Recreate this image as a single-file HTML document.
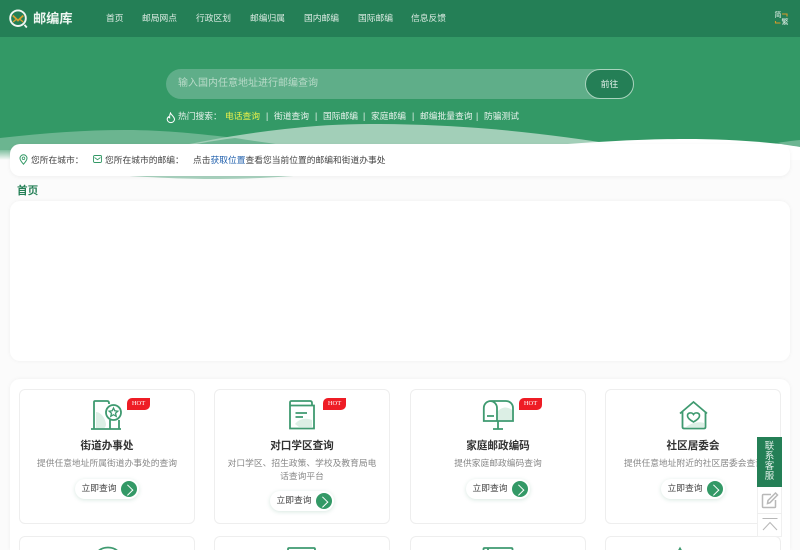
<!DOCTYPE html>
<html lang="zh"><head><meta charset="utf-8"><title>邮编库</title>
<style>
*{box-sizing:border-box;margin:0;padding:0}
html,body{width:800px;height:550px;overflow:hidden;background:#fbfbfb;font-family:"Liberation Sans","Noto Sans CJK SC",sans-serif}
#wrap{position:relative;width:800px;height:550px;overflow:hidden;background:#fbfbfb;filter:blur(.3px)}
.a{position:absolute;white-space:nowrap}
#nav{left:0;top:0;width:800px;height:37px;background:#247f56}
.n{top:12px;font-size:8.75px;line-height:13px;color:#dcebe3}
#hero{left:0;top:37px;width:800px;height:113px;background:#339966}
#search{left:166px;top:69px;width:440px;height:30px;border-radius:15px 0 0 15px;background:#5fae89;color:#b9dbc9;font-size:10px;line-height:30px;padding-left:12px}
#go{left:585px;top:69px;width:49px;height:30px;border-radius:15px;background:#247f56;border:1px solid #a9d3bd;color:#e6f2ec;font-size:8.75px;line-height:28px;text-align:center}
.h{top:110px;font-size:8.75px;line-height:13px;color:#e8f3ed}
#bar{left:10px;top:144px;width:780px;height:32px;background:#fff;border-radius:10px;box-shadow:0 1px 4px rgba(0,0,0,.05)}
.b{top:154px;font-size:8.75px;line-height:12px;color:#444}
#panel1{left:10px;top:201px;width:780px;height:160px;background:#fff;border-radius:10px;box-shadow:0 0 4px rgba(0,0,0,.05)}
#panel2{left:10px;top:379px;width:780px;height:171px;background:#fff;border-radius:10px 10px 0 0;box-shadow:0 0 4px rgba(0,0,0,.05)}
.c{top:389px;width:176px;height:135px;background:#fff;border:1px solid #eee;border-radius:6px}
.r{top:536px;width:176px;height:14px;background:#fff;border:1px solid #eee;border-bottom:0;border-radius:6px 6px 0 0}
.t{top:439px;text-align:center;font-size:10.6px;font-weight:bold;color:#333;line-height:15px}
.d{text-align:center;font-size:8.75px;line-height:12.5px;color:#888;white-space:normal}
.btn{height:20px;width:64px;border-radius:10px;background:#fff;box-shadow:0 1px 4px rgba(40,130,90,.18);font-size:8.75px;line-height:19px;color:#444;padding-left:6.5px}
.btn i{position:absolute;right:2px;top:2px;width:16px;height:16px;border-radius:50%;background:#339966}
.btn i:after{content:"";position:absolute;left:3px;top:4.5px;width:6.5px;height:6.5px;border-top:1px solid #fff;border-right:1px solid #fff;transform:rotate(45deg)}
.hot{width:23px;height:12px;background:#ee1c25;border-radius:5px 0 5px 0;color:#fff;font:6.5px/12px "Liberation Serif",serif;text-align:center}
svg{position:absolute;overflow:hidden}
</style></head><body><div id="wrap">
<div class="a" id="hero"></div>
<svg class="a" style="left:0;top:110px" width="800" height="55" viewBox="0 110 800 55">
<defs><linearGradient id="fade" x1="0" y1="0" x2="0" y2="1"><stop offset="0" stop-color="#7fbf9f"/><stop offset="1" stop-color="#fbfbfb"/></linearGradient></defs>
<path d="M0 150H12V160H0Z" fill="url(#fade)"/>
<path d="M0 138C45 133 85 130 125 130C165 130 200 134 235 138C210 141 190 145 170 150H0Z" fill="#fff" fill-opacity=".28"/>
<path d="M160 150C230 135 300 124 370 124C460 124 540 132 625 146V150Z" fill="#a2cfb8"/>
<path d="M170 150C190 145 210 141 235 138C260 142 290 146 320 150Z" fill="#6db592"/>
<path d="M760 146C775 143 790 141 800 140V150H760Z" fill="#6db592"/>
<path d="M545 146C600 141 650 139 685 139C730 139 770 142 800 147V160H545Z" fill="#fff"/>
</svg>
<div class="a" id="nav"></div>
<svg class="a" style="left:9px;top:9px" width="20" height="20" viewBox="0 0 20 20"><circle cx="9" cy="9.2" r="7.8" fill="none" stroke="#f1f6f2" stroke-width="1.9"/><path d="M3.800 6.500L9 11.500L14.300 6.500" fill="none" stroke="#d9a030" stroke-width="1.8"/><path d="M4 13L7 10.500M14.200 13L11.200 10.500" stroke="#d9a030" stroke-width="1.300"/><path d="M15.500 15.800L17.800 18.500" stroke="#f1f6f2" stroke-width="1.800"/></svg>
<div class="a" style="left:33px;top:10px;font-size:13.2px;line-height:18px;font-weight:bold;color:#eef6f1">邮编库</div>
<div class="a n" style="left:106px">首页</div>
<div class="a n" style="left:142px">邮局网点</div>
<div class="a n" style="left:196px">行政区划</div>
<div class="a n" style="left:250px">邮编归属</div>
<div class="a n" style="left:304px">国内邮编</div>
<div class="a n" style="left:358px">国际邮编</div>
<div class="a n" style="left:411px">信息反馈</div>
<div class="a" style="left:774.500px;top:12px;font-size:7px;line-height:8px;color:#e8f3ed">简</div>
<div class="a" style="left:781.500px;top:19px;font-size:7px;line-height:8px;color:#e8f3ed">繁</div>
<svg class="a" style="left:774px;top:12px" width="16" height="14" viewBox="0 0 16 14"><path d="M8 2H13V4.500M1.500 9V11H6.500" fill="none" stroke="#d69a2a" stroke-width="1.100"/></svg>
<div class="a" id="search">输入国内任意地址进行邮编查询</div>
<div class="a" id="go">前往</div>
<svg class="a" style="left:166px;top:112px" width="10" height="12" viewBox="0 0 10 12"><path d="M4.500 1C5 3 8.500 4.500 8.500 7.500A3.700 3.700 0 0 1 1.200 7.500C1.200 6.300 1.800 5.300 2.500 4.800C2.800 5.500 3.200 5.800 3.700 5.900C3.500 4 3.800 2.300 4.500 1Z" fill="none" stroke="#fff" stroke-width="1"/></svg>
<div class="a h" style="left:178px">热门搜索：</div>
<div class="a h" style="left:225px;color:#eaf04a">电话查询</div>
<div class="a h" style="left:266px">|</div>
<div class="a h" style="left:274px">街道查询</div>
<div class="a h" style="left:315px">|</div>
<div class="a h" style="left:323px">国际邮编</div>
<div class="a h" style="left:363px">|</div>
<div class="a h" style="left:371px">家庭邮编</div>
<div class="a h" style="left:412px">|</div>
<div class="a h" style="left:420px">邮编批量查询</div>
<div class="a h" style="left:476px">|</div>
<div class="a h" style="left:484px">防骗测试</div>

<svg class="a" style="left:110px;top:172px" width="200" height="10" viewBox="0 0 200 10"><path d="M5 3C50 6 80 7 110 7C140 7 170 5 196 3Z" fill="#a9d3bf"/></svg>
<div class="a" id="bar"></div>
<svg class="a" style="left:19px;top:154px" width="9" height="11" viewBox="0 0 9 11"><path d="M4.500 10.200C2.500 8 1 6.300 1 4.300A3.500 3.500 0 0 1 8 4.300C8 6.300 6.500 8 4.500 10.200Z" fill="none" stroke="#339966" stroke-width="1"/><circle cx="4.500" cy="4.300" r="1.300" fill="none" stroke="#339966" stroke-width=".8"/></svg>
<div class="a b" style="left:31px">您所在城市：</div>
<svg class="a" style="left:93px;top:155px" width="9" height="8" viewBox="0 0 9 8"><rect x=".5" y=".5" width="8" height="7" rx="1.200" fill="none" stroke="#339966" stroke-width=".9"/><path d="M1.500 2.500L4.500 4.700L7.500 2.500" fill="none" stroke="#339966" stroke-width=".8"/></svg>
<div class="a b" style="left:105px">您所在城市的邮编：</div>
<div class="a b" style="left:193px">点击<span style="color:#2261ad">获取位置</span>查看您当前位置的邮编和街道办事处</div>
<div class="a" style="left:17px;top:183px;font-size:10.6px;line-height:16px;font-weight:bold;color:#247f56">首页</div>
<div class="a" id="panel1"></div>
<div class="a" id="panel2"></div>

<div class="a c" style="left:19px"></div><div class="a c" style="left:214px"></div><div class="a c" style="left:410px"></div><div class="a c" style="left:605px"></div>
<div class="a r" style="left:19px"></div><div class="a r" style="left:214px"></div><div class="a r" style="left:410px"></div><div class="a r" style="left:605px"></div>

<!-- icon 1 -->
<svg class="a" style="left:90px;top:399px" width="34" height="32" viewBox="0 0 34 32" fill="none" stroke="#3f9a70" stroke-width="1.800"><path d="M6 13C10 13 15 18 16 25C16 27 15 29 14 29H6Z" fill="#dcefe5" stroke="none"/><path d="M4 30V3Q4 2 5 2H17Q19 2 19 4V5"/><path d="M1 30H31"/><circle cx="23.500" cy="13.500" r="7.500"/><path d="M23.500 9L24.800 11.800L27.800 12.200L25.500 14.200L26.200 17.300L23.500 15.700L20.800 17.300L21.500 14.200L19.200 12.200L22.200 11.800Z" stroke-width="1.300"/><path d="M20 21V30M29 21V30"/></svg>
<div class="a hot" style="left:127px;top:398px">HOT</div>
<div class="a t" style="left:19px;width:176px">街道办事处</div>
<div class="a d" style="left:27px;top:457px;width:160px">提供任意地址所属街道办事处的查询</div>
<div class="a btn" style="left:75px;top:479px">立即查询<i></i></div>

<!-- icon 2 -->
<svg class="a" style="left:288px;top:399px" width="28" height="32" viewBox="0 0 28 32" fill="none" stroke="#3f9a70" stroke-width="1.800"><path d="M7 25C12 19 19 19 24 21V28H11Z" fill="#dcefe5" stroke="none"/><path d="M2 6.500V29.500H26V6.500H2ZM2 6.500V3.500Q2 2 3.500 2H22Q24 2 24 4V6.500"/><path d="M7.500 14H19M7.500 18H15"/></svg>
<div class="a hot" style="left:323px;top:398px">HOT</div>
<div class="a t" style="left:214px;width:176px">对口学区查询</div>
<div class="a d" style="left:224px;top:457px;width:156px">对口学区、招生政策、学校及教育局电话查询平台</div>
<div class="a btn" style="left:270px;top:491px">立即查询<i></i></div>

<!-- icon 3 -->
<svg class="a" style="left:482px;top:399px" width="34" height="32" viewBox="0 0 34 32" fill="none" stroke="#3f9a70" stroke-width="1.800"><path d="M16 12C21 7 26 8 30 11V21H16Z" fill="#dcefe5" stroke="none"/><path d="M1.800 22V9A7 7 0 0 1 8.800 2H24A7 7 0 0 1 31 9V22H1.800ZM8.800 2A7 7 0 0 1 15 9V22"/><path d="M5 17H12M16 22V30M11 30H21"/></svg>
<div class="a hot" style="left:519px;top:398px">HOT</div>
<div class="a t" style="left:410px;width:176px">家庭邮政编码</div>
<div class="a d" style="left:418px;top:457px;width:160px">提供家庭邮政编码查询</div>
<div class="a btn" style="left:466px;top:479px">立即查询<i></i></div>

<!-- icon 4 -->
<svg class="a" style="left:679px;top:400px" width="30" height="30" viewBox="0 0 30 30" fill="none" stroke="#3f9a70" stroke-width="1.800"><path d="M7 27C12 23 20 21 25 23V27Z" fill="#dcefe5" stroke="none"/><path d="M1 13.500L14.500 2L28 13.500M3.500 11.500V27Q3.500 28.500 5 28.500H25Q26.500 28.500 26.500 27V11.500"/><path d="M14.500 22C10.500 19.500 8.500 18 8.500 15.500C8.500 12.500 13 12 14.500 14.500C16 12 20.500 12.500 20.500 15.500C20.500 18 18.500 19.500 14.500 22Z" stroke-width="1.600"/></svg>
<div class="a t" style="left:605px;width:176px">社区居委会</div>
<div class="a d" style="left:613px;top:457px;width:165px;white-space:nowrap;text-align:left;padding-left:11px;height:13px;overflow:hidden">提供任意地址附近的社区居委会查询</div>
<div class="a btn" style="left:661px;top:479px">立即查询<i></i></div>

<!-- row 2 icon tops -->
<svg class="a" style="left:90px;top:545px" width="34" height="5" viewBox="0 0 34 5" fill="none" stroke="#3f9a70" stroke-width="1.800"><path d="M6 9C9 4 13 2.500 18 2.500C23 2.500 27 4 30 9"/></svg>
<svg class="a" style="left:287px;top:546px" width="30" height="4" viewBox="0 0 30 4" fill="none" stroke="#3f9a70" stroke-width="1.800"><path d="M1 8V3Q1 2 2 2H27Q28 2 28 3V8"/></svg>
<svg class="a" style="left:482px;top:546px" width="32" height="4" viewBox="0 0 32 4" fill="none" stroke="#3f9a70" stroke-width="1.800"><path d="M1.500 8V3Q1.500 2 2.500 2H29.500Q30.500 2 30.500 3V8M6 2V8"/></svg>
<svg class="a" style="left:675px;top:546px" width="12" height="4" viewBox="0 0 12 4" fill="none" stroke="#3f9a70" stroke-width="1.800"><path d="M2 8L5 2.500L8 8"/></svg>

<!-- side -->
<div class="a" style="left:757px;top:437px;width:25px;height:50px;background:#247f56;color:#e6f2ec;font-size:9.500px;line-height:10px;text-align:center;white-space:normal;padding:5px 7px 0">联系客服</div>
<div class="a" style="left:757px;top:487px;width:25px;height:50px;background:#fff;border:1px solid #f0f0f0;border-top:0"></div>
<div class="a" style="left:757px;top:513px;width:25px;height:1px;background:#eee"></div>
<svg class="a" style="left:761px;top:491px" width="18" height="18" viewBox="0 0 18 18" fill="none" stroke="#b8b8b8" stroke-width="1.500"><path d="M14.500 9V15.500Q14.500 16.500 13.500 16.500H2.500Q1.500 16.500 1.500 15.500V4.500Q1.500 3.500 2.500 3.500H10"/><path d="M6.500 12.500L7 9.500L14.500 2L16.500 4L9 11.700Z"/></svg>
<svg class="a" style="left:761px;top:517px" width="18" height="16" viewBox="0 0 18 16" fill="none" stroke="#b8b8b8" stroke-width="1.100"><path d="M1.500 1.500H16.500M2 13L9 5.500L16 13"/></svg>
</div></body></html>
